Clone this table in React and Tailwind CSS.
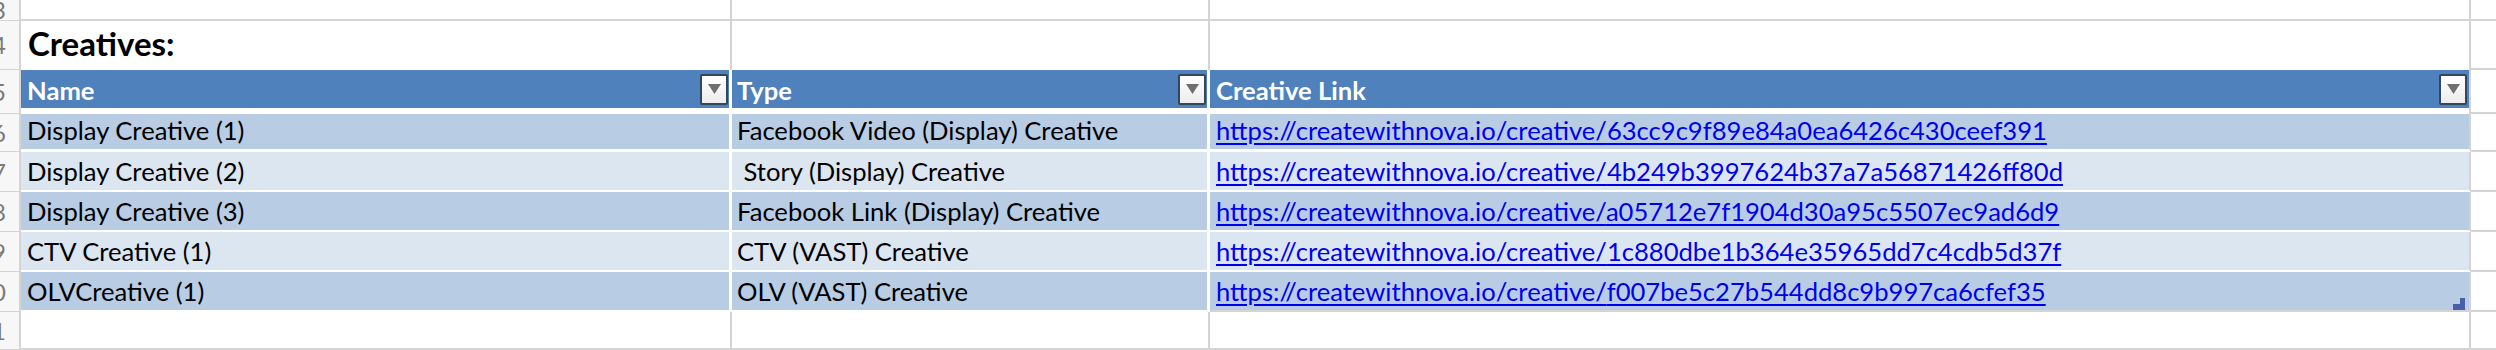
import React from "react";

const rows = [
  { num: "6", name: "Display Creative (1)", type: "Facebook Video (Display) Creative", id: "63cc9c9f89e84a0ea6426c430ceef391" },
  { num: "7", name: "Display Creative (2)", type: " Story (Display) Creative", id: "4b249b3997624b37a7a56871426ff80d" },
  { num: "8", name: "Display Creative (3)", type: "Facebook Link (Display) Creative", id: "a05712e7f1904d30a95c5507ec9ad6d9" },
  { num: "9", name: "CTV Creative (1)", type: "CTV (VAST) Creative", id: "1c880dbe1b364e35965dd7c4cdb5d37f" },
  { num: "10", name: "OLVCreative (1)", type: "OLV (VAST) Creative", id: "f007be5c27b544dd8c9b997ca6cfef35" },
];

function RowNum({ n }) {
  return (
    <div className="w-[21px] shrink-0 overflow-hidden flex items-center justify-end pr-[13px] bg-[#f7f7f7] border-r-2 border-b border-[#d4d4d4] text-[#7a7a7a] text-[24px] leading-none">
      <span>{n}</span>
    </div>
  );
}

function Dropdown() {
  return (
    <div className="w-[28px] h-[31px] shrink-0 flex items-center justify-center bg-gradient-to-b from-white to-[#ececec] border-2 border-[#34465c] rounded-[2px]">
      <svg width="13" height="10" viewBox="0 0 13 10">
        <polygon points="0,0 13,0 6.5,10" fill="#6f6f6f" />
      </svg>
    </div>
  );
}

function EmptyRow({ n, h, children }) {
  return (
    <div className={`flex ${h}`}>
      <RowNum n={n} />
      <div className="w-[711px] shrink-0 border-r-2 border-b-2 border-[#d4d4d4] flex items-end">{children}</div>
      <div className="w-[478px] shrink-0 border-r-2 border-b-2 border-[#d4d4d4]"></div>
      <div className="w-[1261px] shrink-0 border-r-2 border-b-2 border-[#d4d4d4]"></div>
      <div className="flex-1 border-b-2 border-[#d4d4d4]"></div>
    </div>
  );
}

export default function App() {
  return (
    <div className="w-[2496px] h-[350px] overflow-hidden bg-white font-['Lato',sans-serif] text-[25.6px] text-black">
      <EmptyRow n="3" h="h-[21px]" />
      <div className="flex h-[49px]">
        <RowNum n="4" />
        <div className="w-[711px] shrink-0 border-r-2 border-[#d4d4d4] flex items-end pl-[7px] pb-[10px]">
          <span className="font-bold text-[33px] leading-none">Creatives:</span>
        </div>
        <div className="w-[478px] shrink-0 border-r-2 border-[#d4d4d4]"></div>
        <div className="w-[1261px] shrink-0 border-r-2 border-[#d4d4d4]"></div>
        <div className="flex-1 border-b-2 border-[#d4d4d4]"></div>
      </div>

      {/* header */}
      <div className="flex h-[44px]">
        <RowNum n="5" />
        <div className="w-[711px] shrink-0 bg-[#4f81bd] border-r-[3px] border-b-[6px] border-white flex items-center justify-between pl-[6px] pr-[1px]">
          <span className="self-end pb-[4px] font-bold text-white leading-none">Name</span>
          <Dropdown />
        </div>
        <div className="w-[478px] shrink-0 bg-[#4f81bd] border-r-[3px] border-b-[6px] border-white flex items-center justify-between pl-[5px] pr-[1px]">
          <span className="self-end pb-[4px] font-bold text-white leading-none">Type</span>
          <Dropdown />
        </div>
        <div className="w-[1261px] shrink-0 bg-[#4f81bd] border-r-2 border-[#d4d4d4] flex items-center justify-between pl-[6px] pr-[2px] shadow-[inset_0_-6px_0_#ffffff]">
          <span className="self-end pb-[10px] font-bold text-white leading-none">Creative Link</span>
          <div className="mb-[6px]">
            <Dropdown />
          </div>
        </div>
        <div className="flex-1 border-b-2 border-[#d4d4d4]"></div>
      </div>

      {rows.map((r, i) => {
        const band = i % 2 === 0 ? "bg-[#b8cce4]" : "bg-[#dce6f1]";
        const h = i === 0 ? "h-[38px] border-b-[3px]" : "h-[40px] border-b-2";
        const last = i === rows.length - 1;
        return (
          <div key={r.id} className="flex">
            <RowNum n={r.num} />
            <div className={`w-[711px] shrink-0 ${band} ${h} border-r-[3px] border-white flex items-end pl-[6px] pb-[5px]`}>
              <span className="leading-none whitespace-pre">{r.name}</span>
            </div>
            <div className={`w-[478px] shrink-0 ${band} ${h} border-r-[3px] border-white flex items-end pl-[5px] pb-[5px]`}>
              <span className="leading-none whitespace-pre">{r.type}</span>
            </div>
            <div className={`relative w-[1261px] shrink-0 ${band} ${h} ${last ? "border-b-[#d4d4d4]" : "border-b-white"} border-r-2 border-r-[#d4d4d4] flex items-end pl-[6px] pb-[5px]`}>
              <a href="#" className="leading-none text-[#0000f0] underline decoration-2 underline-offset-[3px]">
                https://createwithnova.io/creative/{r.id}
              </a>
              {last && (
                <svg className="absolute right-[4px] bottom-[0px]" width="12" height="12" viewBox="0 0 12 12">
                  <polygon points="7,0 12,0 12,12 0,12 0,6 7,6" fill="#4b5ea8" />
                </svg>
              )}
            </div>
            <div className={`flex-1 ${i === 0 ? "h-[38px]" : "h-[40px]"} border-b-2 border-[#d4d4d4]`}></div>
          </div>
        );
      })}

      <EmptyRow n="11" h="h-[38px]" />
    </div>
  );
}
